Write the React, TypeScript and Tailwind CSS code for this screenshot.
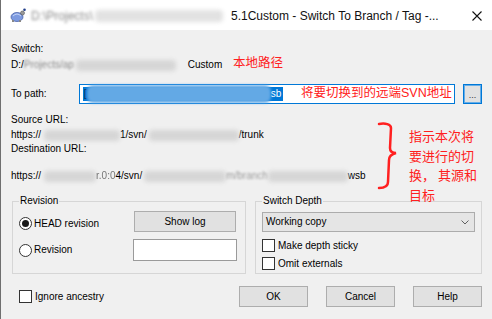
import React from "react";

function Blob({ c }: { c: string }) {
  return <span className={`inline-block h-[11px] bg-[#d6d6d6] blur-[2px] rounded-sm ${c}`} />;
}

function Radio({ checked }: { checked?: boolean }) {
  return (
    <span className="w-[13px] h-[13px] rounded-full border border-[#333333] bg-white flex items-center justify-center shrink-0">
      {checked && <span className="w-[7px] h-[7px] rounded-full bg-[#1a1a1a]" />}
    </span>
  );
}

function Check() {
  return <span className="w-[13px] h-[13px] border border-[#333333] bg-white shrink-0" />;
}

function Btn({ label, c }: { label: string; c: string }) {
  return (
    <div className={`flex items-center justify-center bg-[#e1e1e1] border border-[#adadad] ${c}`}>
      {label}
    </div>
  );
}

export default function App() {
  return (
    <div className="relative w-[492px] h-[319px] overflow-hidden bg-[#f0f0f0] border-l border-[#6f6f6f] font-['Liberation_Sans',Arial,sans-serif] text-[10px] leading-[12px] text-black">
      {/* Title bar */}
      <div className="h-[30px] bg-white flex items-center pt-[1px]">
        <svg className="ml-[9px] w-[16px] h-[15px]" viewBox="0 0 16 15">
          <ellipse cx="7" cy="9" rx="6" ry="4.5" fill="#7d9ae0" stroke="#4a62a8" strokeWidth="0.8" />
          <path d="M3 8 Q7 4 11 8" stroke="#c7d6f7" strokeWidth="1" fill="none" />
          <circle cx="12.5" cy="5" r="2" fill="#9a9a9a" stroke="#555" strokeWidth="0.6" />
          <rect x="2" y="12" width="2" height="2" fill="#888" />
          <rect x="9" y="12" width="2" height="2" fill="#888" />
          <circle cx="14.5" cy="1.8" r="1.3" fill="#1f3c88" />
        </svg>
        <span className="ml-[5px] w-[200px] flex items-center whitespace-nowrap">
          <span className="text-[12px] text-[#8a8a8a] blur-[1.4px]">D:\Projects\</span>
          <span className="inline-block w-[128px] h-[12px] ml-[2px] bg-[#e2e2e2] blur-[2px] rounded-sm" />
        </span>
        <span className="text-[12px] whitespace-nowrap text-[#111]">
          5.1Custom - Switch To Branch / Tag -...
        </span>
        <svg className="ml-auto mr-[10px] w-[10px] h-[10px]" viewBox="0 0 10 10">
          <path d="M0.5 0.5 L9.5 9.5 M9.5 0.5 L0.5 9.5" stroke="#111" strokeWidth="1.1" />
        </svg>
      </div>

      {/* Body */}
      <div className="pl-[10px] pr-[10px] flex flex-col">
        <div className="mt-[13px]">Switch:</div>
        <div className="mt-[4px] flex items-center whitespace-nowrap">
          <span>D:/</span>
          <span className="inline-flex items-center w-[164px]">
            <span className="text-[#8a8a8a] blur-[1.2px]">Projects/ap</span>
            <Blob c="w-[100px] ml-[2px]" />
          </span>
          <span>Custom</span>
        </div>

        {/* To path */}
        <div className="mt-[13px] flex items-center h-[20px]">
          <span className="w-[68px]">To path:</span>
          <div className="w-[377px] h-[20px] bg-white border border-[#0078d7] flex items-center pl-[3px]">
            <span className="flex items-center h-[14px] bg-[#0078d7] text-white">
              <span className="text-[#0a2a60] pl-[1px]">[</span>
              <span className="w-[184px] h-[18px] bg-[#63a9e5] blur-[1.5px] rounded-md" />
              <span className="pr-[2px]">sb</span>
            </span>
          </div>
          <div className="ml-[8px] w-[19px] h-[20px] bg-[#e1e1e1] border border-[#0078d7] shadow-[inset_0_0_0_1px_#66aee8] flex items-end justify-center pb-[3px] text-[9px] leading-[9px] text-[#333]">
            ...
          </div>
        </div>

        {/* URLs */}
        <div className="mt-[10px]">Source URL:</div>
        <div className="mt-[3px] flex items-center whitespace-nowrap">
          <span>https://</span>
          <Blob c="w-[76px] ml-[3px]" />
          <span>1/svn/</span>
          <Blob c="w-[90px] ml-[2px]" />
          <span>/trunk</span>
        </div>
        <div className="mt-[2px]">Destination URL:</div>
        <div className="mt-[15px] flex items-center whitespace-nowrap">
          <span>https://</span>
          <Blob c="w-[52px] ml-[3px]" />
          <span className="text-[#777] blur-[0.7px]">r.0:0</span>
          <span>4/svn/</span>
          <Blob c="w-[82px] ml-[2px]" />
          <span className="text-[#9a9a9a] blur-[0.8px]">m/branch</span>
          <Blob c="w-[80px]" />
          <span>wsb</span>
        </div>

        {/* Group boxes */}
        <div className="mt-[19px] flex gap-[9px] h-[73px]">
          <div className="relative ml-[1px] w-[234px] border border-[#d6d6d6] pl-[6px] pr-[8px]">
            <span className="absolute left-[6px] -top-[7px] bg-[#f0f0f0] px-[1px]">Revision</span>
            <div className="mt-[9px] flex items-start h-[21px]">
              <div className="mt-[6px] w-[115px] flex items-center gap-[2px]">
                <Radio checked />
                <span>HEAD revision</span>
              </div>
              <Btn label="Show log" c="w-[102px] h-[21px]" />
            </div>
            <div className="mt-[7px] flex items-center h-[22px]">
              <div className="w-[114px] flex items-center gap-[2px]">
                <Radio />
                <span>Revision</span>
              </div>
              <div className="w-[104px] h-[22px] bg-white border border-[#9a9a9a]" />
            </div>
          </div>

          <div className="relative w-[227px] border border-[#d6d6d6] pl-[6px]">
            <span className="absolute left-[6px] -top-[7px] bg-[#f0f0f0] px-[1px]">Switch Depth</span>
            <div className="mt-[10px] w-[213px] h-[20px] bg-[#e5e5e5] border border-[#acacac] flex items-center pl-[3px] pr-[5px]">
              <span>Working copy</span>
              <svg className="ml-auto w-[8px] h-[5px]" viewBox="0 0 8 5">
                <path d="M0.5 0.5 L4 4 L7.5 0.5" stroke="#606060" strokeWidth="1" fill="none" />
              </svg>
            </div>
            <div className="mt-[7px] flex items-center gap-[3px] h-[13px]">
              <Check />
              <span>Make depth sticky</span>
            </div>
            <div className="mt-[5px] flex items-center gap-[3px] h-[13px]">
              <Check />
              <span>Omit externals</span>
            </div>
          </div>
        </div>

        {/* Bottom row */}
        <div className="mt-[12px] flex items-center h-[21px]">
          <div className="ml-[8px] flex items-center gap-[3px]">
            <Check />
            <span>Ignore ancestry</span>
          </div>
          <div className="ml-auto flex gap-[18px]">
            <Btn label="OK" c="w-[69px] h-[21px]" />
            <Btn label="Cancel" c="w-[69px] h-[21px]" />
            <Btn label="Help" c="w-[69px] h-[21px]" />
          </div>
        </div>
      </div>

      {/* Red annotations (overlay) */}
      <div className="absolute left-[232px] top-[54px] text-[12.5px] leading-[16px] text-[#ff2020] font-['Noto_Sans_CJK_SC',sans-serif]">
        本地路径
      </div>
      <div className="absolute left-[300px] top-[85px] text-[12.5px] leading-[16px] text-[#ff2020] whitespace-nowrap font-['Liberation_Sans','Noto_Sans_CJK_SC',sans-serif]">
        将要切换到的远端SVN地址
      </div>
      <svg className="absolute left-[374px] top-[120px] w-[26px] h-[72px]" viewBox="0 0 26 72">
        <path
          d="M4 4 C10 3 16 4 16 8 L15 28 C15 31 17 33 21 33 C17 34 14 36 14 40 L13 62 C13 66 10 68 4 68"
          stroke="#ff2020"
          strokeWidth="2.5"
          fill="none"
          strokeLinecap="round"
        />
      </svg>
      <div className="absolute left-[408px] top-[126px] text-[13px] leading-[19.5px] text-[#ff2020] font-['Noto_Sans_CJK_SC',sans-serif]">
        <div>指示本次将</div>
        <div>要进行的切</div>
        <div>换， 其源和</div>
        <div>目标</div>
      </div>
    </div>
  );
}
